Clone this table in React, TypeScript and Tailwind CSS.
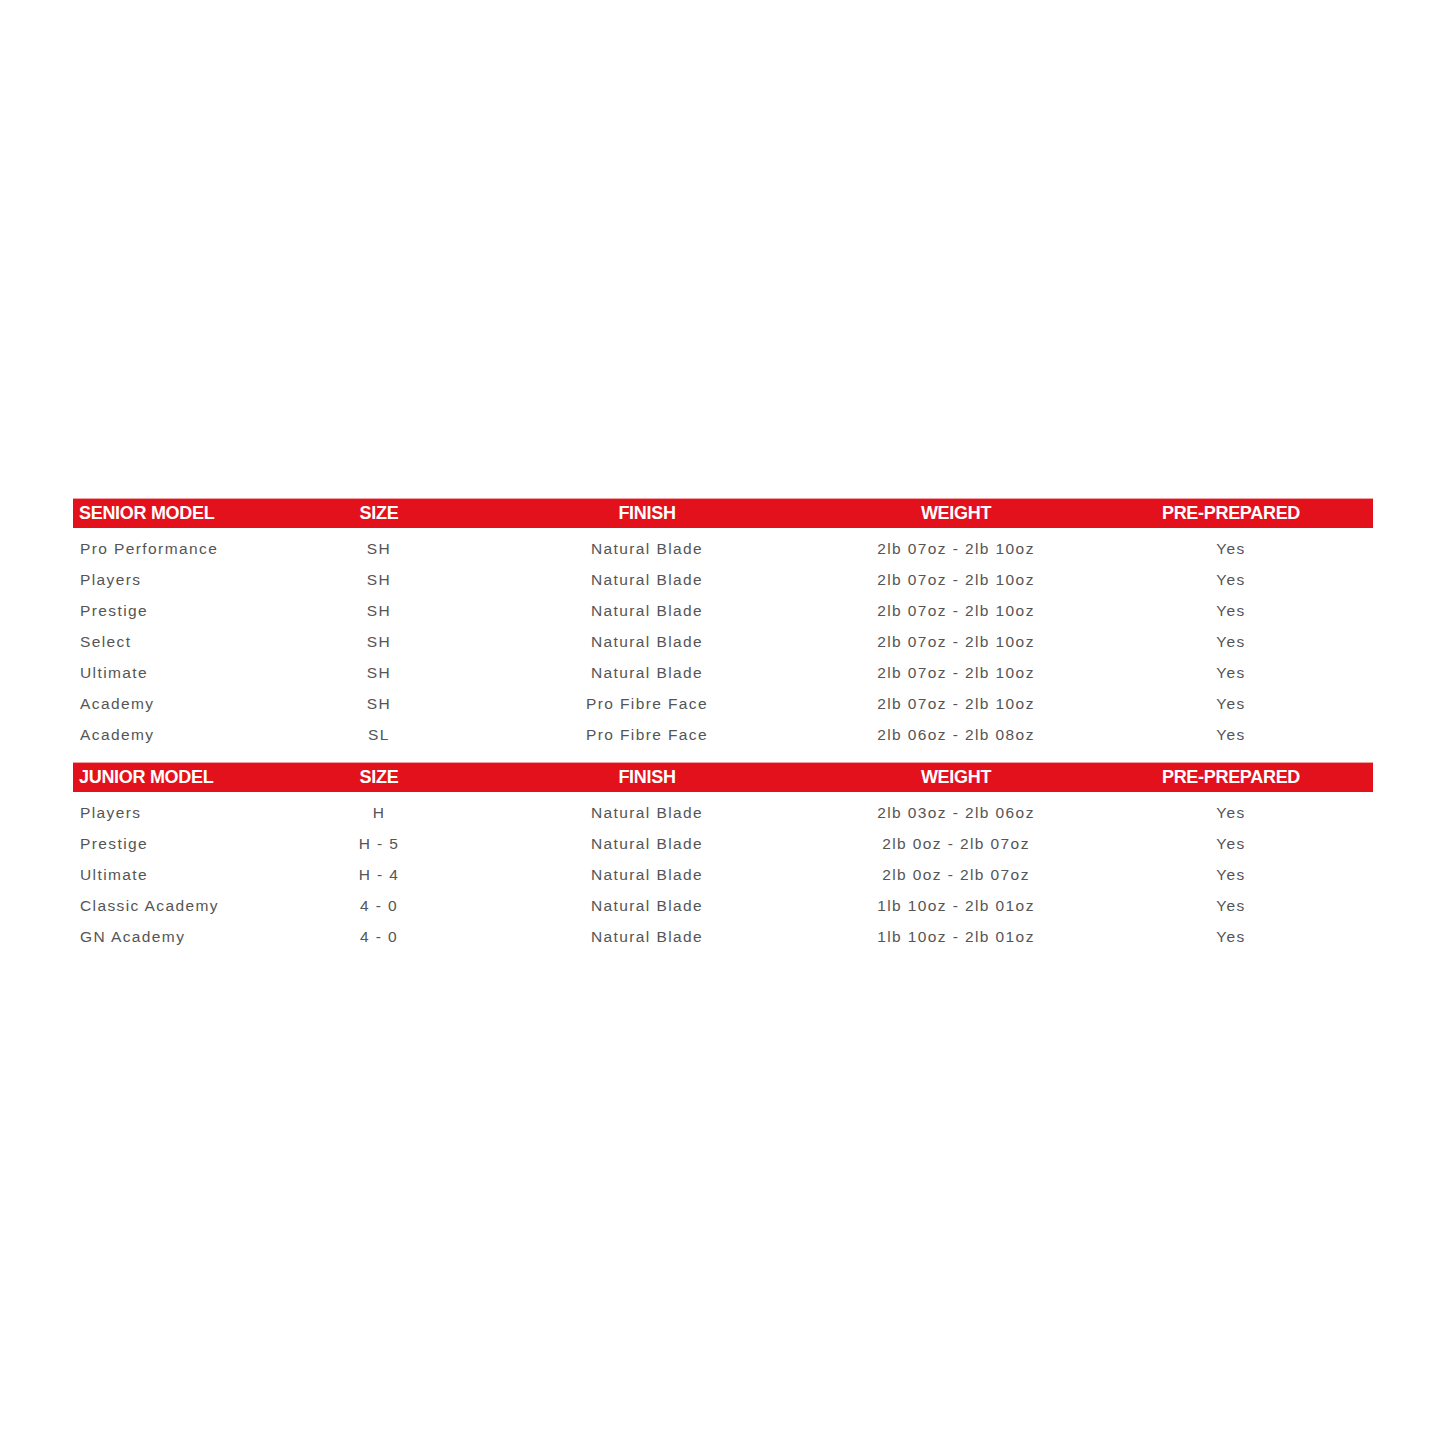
import React from 'react';

type Row = [string, string, string, string, string];

const senior: Row[] = [
  ['Pro Performance', 'SH', 'Natural Blade', '2lb 07oz - 2lb 10oz', 'Yes'],
  ['Players', 'SH', 'Natural Blade', '2lb 07oz - 2lb 10oz', 'Yes'],
  ['Prestige', 'SH', 'Natural Blade', '2lb 07oz - 2lb 10oz', 'Yes'],
  ['Select', 'SH', 'Natural Blade', '2lb 07oz - 2lb 10oz', 'Yes'],
  ['Ultimate', 'SH', 'Natural Blade', '2lb 07oz - 2lb 10oz', 'Yes'],
  ['Academy', 'SH', 'Pro Fibre Face', '2lb 07oz - 2lb 10oz', 'Yes'],
  ['Academy', 'SL', 'Pro Fibre Face', '2lb 06oz - 2lb 08oz', 'Yes'],
];

const junior: Row[] = [
  ['Players', 'H', 'Natural Blade', '2lb 03oz - 2lb 06oz', 'Yes'],
  ['Prestige', 'H - 5', 'Natural Blade', '2lb 0oz - 2lb 07oz', 'Yes'],
  ['Ultimate', 'H - 4', 'Natural Blade', '2lb 0oz - 2lb 07oz', 'Yes'],
  ['Classic Academy', '4 - 0', 'Natural Blade', '1lb 10oz - 2lb 01oz', 'Yes'],
  ['GN Academy', '4 - 0', 'Natural Blade', '1lb 10oz - 2lb 01oz', 'Yes'],
];

const cols = 'grid grid-cols-[214px_184px_352px_266px_284px]';

const Section: React.FC<{ title: string; rows: Row[] }> = ({ title, rows }) => (
  <div>
    {/* Header bar */}
    <div
      className={`${cols} h-[29px] items-center bg-[#e3111b] text-white font-bold text-[18px] tracking-[-0.3px] shadow-[0_-1px_0_#f3a0a3]`}
    >
      <div className="pl-[6px]">{title}</div>
      <div className="text-center">SIZE</div>
      <div className="text-center">FINISH</div>
      <div className="text-center">WEIGHT</div>
      <div className="text-center">PRE-PREPARED</div>
    </div>
    <div className="pt-[5px]">
      {rows.map((r, i) => (
        <div
          key={i}
          className={`${cols} h-[31px] items-center text-[15.5px] text-[#555] tracking-[1.4px]`}
        >
          <div className="pl-[7px] pt-[1px]">{r[0]}</div>
          <div className="text-center pt-[1px]">{r[1]}</div>
          <div className="text-center pt-[1px]">{r[2]}</div>
          <div className="text-center pt-[1px]">{r[3]}</div>
          <div className="text-center pt-[1px]">{r[4]}</div>
        </div>
      ))}
    </div>
  </div>
);

export default function App() {
  return (
    <div
      className="min-h-[1445px] bg-white pt-[499px] pl-[73px]"
      style={{ fontFamily: '"Liberation Sans", Arial, sans-serif' }}
    >
      <div className="w-[1300px] flex flex-col gap-[13px]">
        <Section title="SENIOR MODEL" rows={senior} />
        <Section title="JUNIOR MODEL" rows={junior} />
      </div>
    </div>
  );
}
